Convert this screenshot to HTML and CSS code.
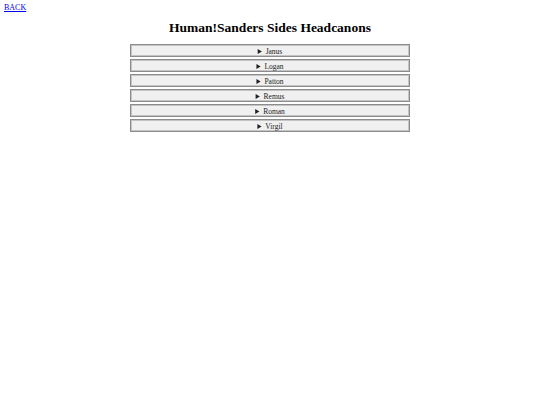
FILE: index.html
```html
<!DOCTYPE html>
<html>
<head>
<meta charset="utf-8">
<link rel="stylesheet" href="styles.css">
</head>
<body>
<a class="back" href="#">BACK</a>
<h1 class="title">Human!Sanders Sides Headcanons</h1>
<div class="list">
<details class="item"><summary>Janus</summary></details>
<details class="item"><summary>Logan</summary></details>
<details class="item"><summary>Patton</summary></details>
<details class="item"><summary>Remus</summary></details>
<details class="item"><summary>Roman</summary></details>
<details class="item"><summary>Virgil</summary></details>
</div>
</body>
</html>
```
FILE: styles.css
```css
body {
  margin: 4px;
  font-family: "Liberation Serif", serif;
  font-size: 8px;
  background: #fff;
}
.back {
  color: #0000ee;
  display: block;
  line-height: 8px;
}
.title {
  font-size: 13.5px;
  text-align: center;
  margin: 8px 0 8px;
  line-height: 16px;
}
.list {
  width: 280px;
  margin: 0 auto;
  display: flex;
  flex-direction: column;
  gap: 2px;
}
.item {
  background: #f0f0f0;
  border: 1px solid #8c8c8c;
  box-shadow: inset 0 0 0 1px #c4c4c4;
  padding: 1px;
  text-align: center;
  color: #222;
}
.item summary {
  font-size: 7.5px;
  line-height: 9px;
  padding-top: 1px;
  margin-bottom: -1px;
  cursor: pointer;
}
```
